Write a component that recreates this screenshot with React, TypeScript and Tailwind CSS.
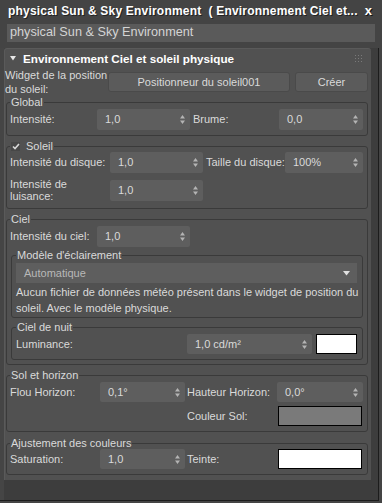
import React from "react";

const FONT = { fontFamily: '"Liberation Sans", Arial, sans-serif' };

function Arrows() {
  return (
    <svg width="5" height="9" viewBox="0 0 5 9" className="shrink-0">
      <path d="M2.5 0 L5 3.5 L0 3.5 Z" fill="#b4b4b4" />
      <path d="M0 5.5 L5 5.5 L2.5 9 Z" fill="#b4b4b4" />
    </svg>
  );
}

function Spinner({ value, className }: { value: string; className: string }) {
  return (
    <div className={`flex items-center justify-between bg-[#5e5e5e] pl-[8px] pr-[5px] rounded-[2px] ${className}`}>
      <span className="whitespace-nowrap">{value}</span>
      <Arrows />
    </div>
  );
}

function Swatch({ className }: { className: string }) {
  return <div className={`border border-black ${className}`} />;
}

function Group({
  title,
  children,
  className,
}: {
  title: React.ReactNode;
  children: React.ReactNode;
  className: string;
}) {
  return (
    <fieldset className={`border border-[#3a3a3a] rounded-[3px] min-w-0 ${className}`}>
      <legend className="px-[1px] leading-[12px]">{title}</legend>
      {children}
    </fieldset>
  );
}

export default function App() {
  return (
    <div
      className="w-[382px] h-[503px] bg-[#444444] text-[#dadada] text-[11px] flex flex-col overflow-hidden"
      style={FONT}
    >
      {/* Title bar */}
      <div className="h-[22px] shrink-0 flex items-center justify-between pl-[8px] pr-[10px] text-white font-bold text-[12px]">
        <span className="whitespace-nowrap tracking-[0.2px] [text-shadow:1px_1px_0_#222]">
          physical Sun &amp; Sky Environment&nbsp; ( Environnement Ciel et...
        </span>
        <span className="text-[13px] [text-shadow:1px_1px_0_#111]">x</span>
      </div>

      {/* Name field */}
      <div className="mt-[2px] mx-[7px] h-[18px] shrink-0 bg-[#5a5a5a] flex items-center pl-[3px] text-[#d4d4d4] text-[12.7px]">
        physical Sun &amp; Sky Environment
      </div>

      {/* Scroll frame */}
      <div className="mt-[6px] w-[379px] flex-1 flex border-r border-b border-[#1c1c1c] mb-[2px] bg-[#3d3d3d]">
        <div className="w-[4px] shrink-0 bg-[#454545]" />
        <div className="w-[367px] shrink-0 flex flex-col">
          <div className="bg-[#515151] rounded-t-[3px] flex flex-col pb-[5px] border-t border-l border-[#5a5a5a]">
            {/* Rollout header */}
            <div className="h-[19px] flex items-center relative">
              <svg width="6" height="5" viewBox="0 0 6 5" className="ml-[5px]">
                <path d="M0 0 L6 0 L3 4.5 Z" fill="#e6e6e6" />
              </svg>
              <span className="ml-[7px] font-bold text-[11.7px] text-white whitespace-nowrap">
                Environnement Ciel et soleil physique
              </span>
              <svg width="7" height="7" viewBox="0 0 7 7" className="absolute right-[9px] top-[6px]">
                {[0, 3, 6].map((y) =>
                  [0, 3, 6].map((x) => (
                    <rect key={`${x}-${y}`} x={x} y={y} width="1" height="1" fill="#7a7a7a" />
                  ))
                )}
              </svg>
            </div>

            {/* Widget row */}
            <div className="flex items-center mr-[3px]">
              <div className="w-[103px] shrink-0 leading-[14px]">
                Widget de la position
                <br />
                du soleil:
              </div>
              <div className="w-[182px] h-[20px] bg-[#5b5b5b] border border-[#4a4a4a] rounded-[3px] flex items-center justify-center">
                Positionneur du soleil001
              </div>
              <div className="ml-[5px] flex-1 h-[20px] bg-[#5b5b5b] border border-[#4a4a4a] rounded-[3px] flex items-center justify-center">
                Créer
              </div>
            </div>

            {/* Global */}
            <Group title="Global" className="ml-[1px] mr-[3px] pl-[3px] pr-[4px] pb-[5px]">
              <div className="flex items-center mt-[1px]">
                <div className="w-[87px] shrink-0">Intensité:</div>
                <Spinner value="1,0" className="w-[93px] h-[21px]" />
                <div className="ml-[3px] w-[86px] shrink-0">Brume:</div>
                <Spinner value="0,0" className="flex-1 h-[21px]" />
              </div>
            </Group>

            {/* Soleil */}
            <Group
              title={
                <span className="flex items-center">
                  <span className="w-[9px] h-[9px] bg-[#474747] flex items-center justify-center mr-[6px]">
                    <svg width="8" height="7" viewBox="0 0 8 7">
                      <path d="M1 3.5 L3 5.5 L7 1" stroke="#d8d8d8" strokeWidth="1.6" fill="none" />
                    </svg>
                  </span>
                  Soleil
                </span>
              }
              className="mt-[4px] ml-[1px] mr-[3px] pl-[3px] pr-[4px] pb-[6px]"
            >
              <div className="flex items-center">
                <div className="w-[100px] shrink-0 whitespace-nowrap">Intensité du disque:</div>
                <Spinner value="1,0" className="w-[93px] h-[21px]" />
                <div className="ml-[3px] w-[79px] shrink-0 whitespace-nowrap">Taille du disque:</div>
                <Spinner value="100%" className="flex-1 h-[21px]" />
              </div>
              <div className="flex items-center mt-[5px]">
                <div className="w-[100px] shrink-0 leading-[12px]">
                  Intensité de
                  <br />
                  luisance:
                </div>
                <Spinner value="1,0" className="w-[93px] h-[21px]" />
              </div>
            </Group>

            {/* Ciel */}
            <Group title="Ciel" className="mt-[4px] ml-[1px] mr-[3px] pl-[3px] pr-[4px] pb-[4px]">
              <div className="flex items-center mt-[1px]">
                <div className="w-[87px] shrink-0 whitespace-nowrap">Intensité du ciel:</div>
                <Spinner value="1,0" className="w-[93px] h-[21px]" />
              </div>

              <Group title="Modèle d'éclairement" className="mt-[2px] ml-[1px] pl-[4px] pr-[5px] pb-[1px]">
                <div className="mt-[2px] h-[20px] bg-[#5e5e5e] flex items-center justify-between pl-[8px] pr-[7px] text-[#b8b8b8]">
                  <span>Automatique</span>
                  <svg width="7" height="5" viewBox="0 0 7 5">
                    <path d="M0 0 L7 0 L3.5 4.5 Z" fill="#e0e0e0" />
                  </svg>
                </div>
                <div className="mt-[1px] leading-[16px] whitespace-nowrap">
                  Aucun fichier de données météo présent dans le widget de position du
                  <br />
                  soleil. Avec le modèle physique.
                </div>
              </Group>

              <Group title="Ciel de nuit" className="mt-[3px] ml-[1px] pl-[4px] pr-[5px] pb-[5px]">
                <div className="flex items-center mt-[1px]">
                  <div className="w-[171px] shrink-0">Luminance:</div>
                  <Spinner value="1,0 cd/m²" className="w-[125px] h-[20px]" />
                  <Swatch className="ml-[4px] flex-1 h-[20px] bg-white" />
                </div>
              </Group>
            </Group>

            {/* Sol et horizon */}
            <Group title="Sol et horizon" className="mt-[4px] ml-[1px] mr-[3px] pl-[3px] pr-[4px] pb-[5px]">
              <div className="flex items-center mt-[1px]">
                <div className="w-[90px] shrink-0">Flou Horizon:</div>
                <Spinner value="0,1°" className="w-[85px] h-[20px]" />
                <div className="ml-[2px] w-[90px] shrink-0 whitespace-nowrap">Hauteur Horizon:</div>
                <Spinner value="0,0°" className="flex-1 h-[20px]" />
              </div>
              <div className="flex items-center mt-[4px]">
                <div className="ml-[177px] w-[91px] shrink-0">Couleur Sol:</div>
                <Swatch className="flex-1 mr-[1px] h-[20px] bg-[#7a7a7a]" />
              </div>
            </Group>

            {/* Ajustement des couleurs */}
            <Group title="Ajustement des couleurs" className="mt-[5px] ml-[1px] mr-[3px] pl-[3px] pr-[4px] pb-[5px]">
              <div className="flex items-center">
                <div className="w-[90px] shrink-0">Saturation:</div>
                <Spinner value="1,0" className="w-[85px] h-[20px]" />
                <div className="ml-[2px] w-[91px] shrink-0">Teinte:</div>
                <Swatch className="flex-1 mr-[1px] h-[20px] bg-white" />
              </div>
            </Group>
          </div>
        </div>
      </div>
    </div>
  );
}
